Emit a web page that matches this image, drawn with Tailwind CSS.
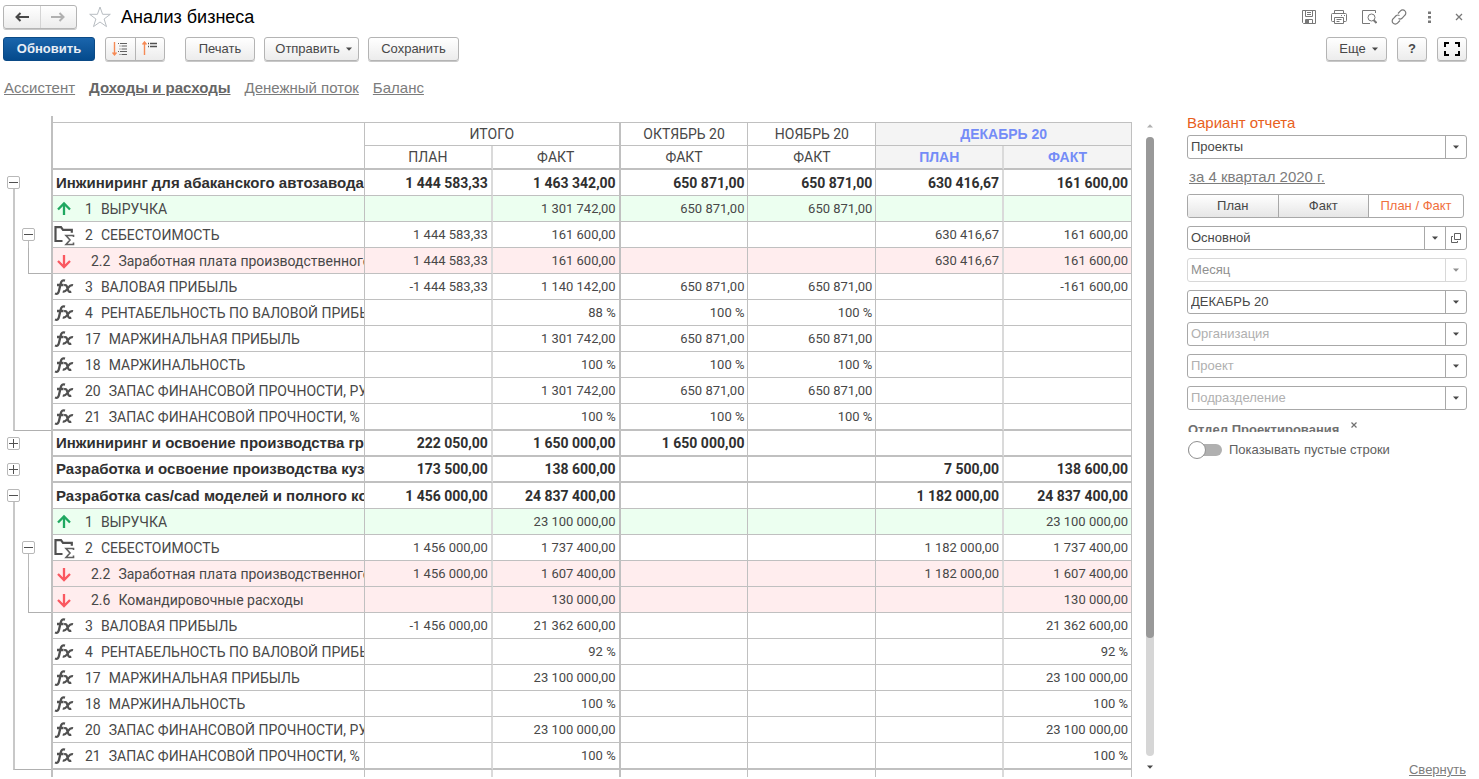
<!DOCTYPE html>
<html lang="ru">
<head>
<meta charset="utf-8">
<title>Анализ бизнеса</title>
<script src="https://cdn.jsdelivr.net/npm/@tailwindcss/browser@4"></script>
</head>
<body class="bg-white font-['Liberation_Sans',sans-serif] text-[13px] text-[#484848]">
<svg class="hidden">
  <symbol id="up" viewBox="0 0 22 22"><path d="M11 17V5.500M5 11.500L11 5.500l6 6" fill="none" stroke="#1fa860" stroke-width="2.300"/></symbol>
  <symbol id="down" viewBox="0 0 22 22"><path d="M11 5v11.500M5 11l6 6 6-6" fill="none" stroke="#fa5860" stroke-width="2.300"/></symbol>
  <symbol id="sum" viewBox="0 0 22 22"><path d="M9.500 17H2.500V3.200h5.500l2 2.600h8.800v3" fill="none" stroke="#505050" stroke-width="2.200"/><path d="M20.500 13v-1.500h-7.500l4 4.500-4 4.500h7.500v-2" fill="none" stroke="#606060" stroke-width="1.600"/></symbol>
  <symbol id="fx" viewBox="0 0 22 22"><path d="M2 17.500c2.500 1 3.500-.5 4-2.700l1.700-7.300c.6-2.500 1.700-3.600 4.300-2.800M4 9h6.500" fill="none" stroke="#505050" stroke-width="2.300"/><path d="M11 9.300c2-.8 2.700.4 3.200 2.200l.9 2.700c.5 1.600 1.500 2 3.100 1.200M20 9.300c-2.200-.8-3.500.7-5 2.700s-2.800 4.200-5.200 3.400" fill="none" stroke="#505050" stroke-width="2.200"/></symbol>
  <symbol id="caret" viewBox="0 0 6 4"><path d="M0 .5h6L3 3.800z" fill="currentColor"/></symbol>
</svg>

<div class="flex h-screen flex-col overflow-hidden">
  <header class="pr-3 pl-[3px]">
    <div class="flex h-[34px] items-center">
      <div class="flex h-6 w-[74px] overflow-hidden rounded-[3px] border border-[#b4b4b4] bg-linear-to-b from-white to-[#ececec] shadow-[0_1px_0_#c8c8c8]">
        <button aria-label="Назад" class="flex flex-1 items-center justify-center border-r border-[#d4d4d4]"><svg class="h-[10px] w-[14px]" viewBox="0 0 14 10"><path d="M14 5H2M5.500 1L1.500 5l4 4" fill="none" stroke="#484848" stroke-width="2"/></svg></button>
        <button aria-label="Вперед" class="flex flex-1 items-center justify-center"><svg class="h-[10px] w-[14px]" viewBox="0 0 14 10"><path d="M0 5h12M8.500 1l4 4-4 4" fill="none" stroke="#b0b0b0" stroke-width="2"/></svg></button>
      </div>
      <button aria-label="В избранное" class="ml-[11px]"><svg class="size-6" viewBox="0 0 24 24"><path d="M12 2l2.600 7.300h7.700l-6.200 4.700 2.400 7.600L12 17l-6.500 4.600L7.900 14 1.700 9.300h7.700z" fill="#fff" stroke="#b8bdc2" stroke-width="1"/></svg></button>
      <h1 class="ml-[9px] text-[18px] text-black">Анализ бизнеса</h1>
      <div class="ml-auto flex items-center gap-[14px] text-[#787878]">
        <button aria-label="Сохранить файл"><svg class="size-4" viewBox="0 0 16 16" fill="none" stroke="currentColor"><path d="M1.500 1.500h13v13h-12l-1-1zM4.500 1.500v6h7v-6M6 3.500h4M6 5.500h4M4.500 14.500v-4h7v4"/><path d="M5 11h3v3H5z" fill="currentColor" stroke="none"/></svg></button>
        <button aria-label="Печать документа"><svg class="size-4" viewBox="0 0 16 16" fill="none" stroke="currentColor"><path d="M3.500 4.500v-3h9v3M3.500 12.500h-2a1 1 0 0 1-1-1v-6a1 1 0 0 1 1-1h13a1 1 0 0 1 1 1v6a1 1 0 0 1-1 1h-2M3.500 8.500h9v6h-9zM5.500 10.500h5M5.500 12.500h3M10 6.500h1M13 6.500h1"/></svg></button>
        <button aria-label="Предпросмотр"><svg class="size-4" viewBox="0 0 16 16" fill="none" stroke="currentColor"><path d="M14.500 4V1.500h-13v13H9"/><circle cx="10.500" cy="8.500" r="3.500"/><path d="M12.500 11L15.500 14" stroke-width="2"/></svg></button>
        <button aria-label="Ссылка"><svg class="size-4" viewBox="0 0 16 16" fill="none" stroke="currentColor" stroke-width="1.200"><path d="M7 4.500l2.500-2.600a3 3 0 0 1 4.400 0 3 3 0 0 1 0 4.300L11 9.300a3 3 0 0 1-3.500.3M9 11.500l-2.500 2.600a3 3 0 0 1-4.400 0 3 3 0 0 1 0-4.300L5 6.800a3 3 0 0 1 3.500-.3"/></svg></button>
        <button aria-label="Меню"><svg class="size-4" viewBox="0 0 16 16" fill="currentColor"><path d="M7 2.500h3v2.500H7zM7 7h3v2.500H7zM7 11.500h3V14H7z"/></svg></button>
        <button aria-label="Закрыть"><svg class="size-4" viewBox="0 0 16 16"><path d="M5 5l6 6M11 5l-6 6" stroke="currentColor" stroke-width="1.300"/></svg></button>
      </div>
    </div>

    <div class="flex h-[30px] items-center">
      <button class="h-6 w-[92px] rounded-[3px] border border-[#0b4a86] bg-linear-to-b from-[#1a65ac] to-[#044a8c] text-[13px] font-bold text-[#e8eef5]">Обновить</button>
      <div class="ml-[10px] flex h-6 w-[60px] rounded-[3px] border border-[#b4b4b4] bg-linear-to-b from-white to-[#ececec] shadow-[0_1px_0_#c8c8c8]">
        <button aria-label="Развернуть группы" class="flex flex-1 items-center justify-center border-r border-[#b4b4b4]"><svg class="size-4" viewBox="0 0 16 16" fill="none"><path d="M2.500 1v13M.5 11.500l2 2.500 2-2.500" stroke="#f68a55" stroke-width="1.400"/><path d="M8 2.500h7M9.500 5h5.500M9.500 8h5.500M8 10.500h7M9.500 13.500h5.500" stroke="#606060"/><path d="M6 2.500h1M7.500 5h1M7.500 8h1M6 10.500h1M7.500 13.500h1" stroke="#606060"/></svg></button>
        <button aria-label="Свернуть группы" class="flex flex-1 items-center justify-center"><svg class="size-4" viewBox="0 0 16 16" fill="none"><path d="M2.500 14V1M.5 3.500L2.500 1l2 2.500" stroke="#f68a55" stroke-width="1.400"/><path d="M6 2.500h1M8 2.500h7M6 5.500h1M8 5.500h7" stroke="#505050" stroke-width="1.400"/></svg></button>
      </div>
      <button class="ml-5 h-6 w-[70px] rounded-[3px] border border-[#b4b4b4] bg-linear-to-b from-white to-[#ececec] shadow-[0_1px_0_#c8c8c8]">Печать</button>
      <button class="ml-[9px] flex h-6 w-[95px] items-center justify-center gap-[6px] rounded-[3px] border border-[#b4b4b4] bg-linear-to-b from-white to-[#ececec] pl-1 shadow-[0_1px_0_#c8c8c8]">Отправить<svg class="h-1 w-[6px]"><use href="#caret"/></svg></button>
      <button class="ml-[9px] h-6 w-[91px] rounded-[3px] border border-[#b4b4b4] bg-linear-to-b from-white to-[#ececec] shadow-[0_1px_0_#c8c8c8]">Сохранить</button>
      <button class="ml-auto flex h-6 w-[61px] items-center justify-center gap-[6px] rounded-[3px] border border-[#b4b4b4] bg-linear-to-b from-white to-[#ececec] pl-1 shadow-[0_1px_0_#c8c8c8]">Еще<svg class="h-1 w-[6px]"><use href="#caret"/></svg></button>
      <button class="ml-[10px] h-6 w-[30px] rounded-[3px] border border-[#b4b4b4] bg-linear-to-b from-white to-[#ececec] font-bold shadow-[0_1px_0_#c8c8c8]">?</button>
      <button aria-label="На весь экран" class="ml-[10px] flex h-6 w-[30px] items-center justify-center rounded-[3px] border border-[#b4b4b4] bg-linear-to-b from-white to-[#ececec] shadow-[0_1px_0_#c8c8c8]"><svg class="size-4" viewBox="0 0 16 16"><path d="M1 6V2h4M11 2h4v4M15 10v4h-4M5 14H1v-4" fill="none" stroke="#000" stroke-width="2"/></svg></button>
    </div>

    <nav class="flex h-[52px] items-center gap-[14px] pb-[3px] pl-px text-[15px] text-[#7c7c7c]">
      <a href="#" class="underline">Ассистент</a>
      <a href="#" class="font-bold text-[#666] underline">Доходы и расходы</a>
      <a href="#" class="underline">Денежный поток</a>
      <a href="#" class="underline">Баланс</a>
    </nav>
  </header>

  <div class="flex min-h-0 flex-1">
    <div class="mb-[2px] min-w-0 flex-1 overflow-hidden">
      <table class="w-full table-fixed border-separate border-spacing-0">
        <colgroup><col class="w-[51px]"><col class="w-[314px]"><col><col><col><col><col><col></colgroup>
        <thead class="text-[14px] leading-[18px]">
          <tr class="h-[7px]"><td></td><td class="border-b border-l-2 border-[#c0c0c0]"></td><td colspan="6" class="border-b border-[#c0c0c0]"></td></tr>
          <tr class="h-[23px]">
            <td rowspan="2"></td>
            <th rowspan="2" class="border-r border-b-2 border-l-2 border-[#c0c0c0]"></th>
            <th colspan="2" class="border-r-2 border-b border-[#c0c0c0] p-0 font-[Roboto,sans-serif] font-normal">ИТОГО</th>
            <th class="border-r border-b border-[#c0c0c0] p-0 font-[Roboto,sans-serif] font-normal">ОКТЯБРЬ 20</th>
            <th class="border-r border-b border-[#c0c0c0] p-0 font-[Roboto,sans-serif] font-normal">НОЯБРЬ 20</th>
            <th colspan="2" class="border-r border-b border-[#c0c0c0] bg-[#f4f4f4] p-0 text-[#748cf7]">ДЕКАБРЬ 20</th>
          </tr>
          <tr class="h-6">
            <th class="border-r-2 border-b-2 border-[#c0c0c0] border-r-[#dadada] p-0 font-[Roboto,sans-serif] font-normal">ПЛАН</th>
            <th class="border-r-2 border-b-2 border-[#c0c0c0] p-0 font-[Roboto,sans-serif] font-normal">ФАКТ</th>
            <th class="border-r border-b-2 border-[#c0c0c0] p-0 font-[Roboto,sans-serif] font-normal">ФАКТ</th>
            <th class="border-r border-b-2 border-[#c0c0c0] p-0 font-[Roboto,sans-serif] font-normal">ФАКТ</th>
            <th class="border-r-2 border-b-2 border-[#c0c0c0] border-r-[#dadada] bg-[#f4f4f4] p-0 text-[#748cf7]">ПЛАН</th>
            <th class="border-r border-b-2 border-[#c0c0c0] bg-[#f4f4f4] p-0 text-[#748cf7]">ФАКТ</th>
          </tr>
        </thead>
        <tbody id="rows"></tbody>
      </table>
    </div>

    <div class="ml-[14px] flex w-2 flex-col items-center pt-2 pb-[10px]">
      <svg class="h-1 w-[6px] rotate-180 text-[#b0b0b0]"><use href="#caret"/></svg>
      <div class="mt-[9px] w-2 flex-1 rounded-full bg-[#d6d6d6]"><div class="h-[81%] rounded-full bg-[#999]"></div></div>
      <svg class="mt-[9px] h-1 w-[6px]"><use href="#caret"/></svg>
    </div>

    <aside class="mr-3 ml-[33px] flex w-[280px] flex-col">
      <label for="variant" class="h-[19px] text-[15px] leading-[14px] text-[#e8601c]">Вариант отчета</label>
      <div class="relative h-6 shrink-0 rounded-[3px] border border-[#a8a8a8]">
        <select id="variant" class="block h-full w-full appearance-none pl-[3px] outline-none"><option>Проекты</option></select>
        <span class="pointer-events-none absolute inset-y-0 right-0 flex w-[21px] items-center justify-center border-l border-[#a8a8a8]"><svg class="h-1 w-[6px]"><use href="#caret"/></svg></span>
      </div>
      <a href="#" class="mt-[10px] ml-[2px] h-[25px] text-[15px] leading-4 text-[#7c7c7c] underline">за 4 квартал 2020 г.</a>
      <div class="mr-[3px] flex h-6 shrink-0 overflow-hidden rounded-[3px] border border-[#a8a8a8]">
        <button class="flex-1 border-r border-[#a8a8a8] bg-linear-to-b from-white to-[#e6e6e6]">План</button>
        <button class="flex-1 border-r border-[#a8a8a8] bg-linear-to-b from-white to-[#e6e6e6]">Факт</button>
        <button class="w-[94px] text-[#f0703c]">План / Факт</button>
      </div>
      <div class="mt-2 flex flex-col gap-2">
        <div class="relative h-6 rounded-[3px] border border-[#a8a8a8] pr-[21px]">
          <select aria-label="Сценарий" class="block h-full w-full appearance-none pl-[3px] outline-none"><option>Основной</option></select>
          <span class="pointer-events-none absolute inset-y-0 right-[21px] flex w-[21px] items-center justify-center border-l border-[#a8a8a8]"><svg class="h-1 w-[6px]"><use href="#caret"/></svg></span>
          <button aria-label="Открыть" class="absolute inset-y-0 right-0 flex w-[21px] items-center justify-center border-l border-[#a8a8a8]"><svg class="size-[10px]" viewBox="0 0 10 10" fill="none" stroke="#606060"><path d="M3.500.5h6v6h-6zM2 3.500H.5v6h6V8"/></svg></button>
        </div>
        <div class="relative h-6 rounded-[3px] border border-[#d8d8d8] text-[#909090]">
          <select aria-label="Период" disabled class="block h-full w-full appearance-none pl-[3px] opacity-100 outline-none"><option>Месяц</option></select>
          <span class="pointer-events-none absolute inset-y-0 right-0 flex w-[21px] items-center justify-center border-l border-[#d8d8d8]"><svg class="h-1 w-[6px]"><use href="#caret"/></svg></span>
        </div>
        <div class="relative h-6 rounded-[3px] border border-[#a8a8a8]">
          <select aria-label="Месяц" class="block h-full w-full appearance-none pl-[3px] outline-none"><option>ДЕКАБРЬ 20</option></select>
          <span class="pointer-events-none absolute inset-y-0 right-0 flex w-[21px] items-center justify-center border-l border-[#a8a8a8]"><svg class="h-1 w-[6px]"><use href="#caret"/></svg></span>
        </div>
        <div class="relative h-6 rounded-[3px] border border-[#a8a8a8]">
          <select aria-label="Организация" class="block h-full w-full appearance-none pl-[3px] text-[#b0b0b0] outline-none"><option>Организация</option></select>
          <span class="pointer-events-none absolute inset-y-0 right-0 flex w-[21px] items-center justify-center border-l border-[#a8a8a8]"><svg class="h-1 w-[6px]"><use href="#caret"/></svg></span>
        </div>
        <div class="relative h-6 rounded-[3px] border border-[#a8a8a8]">
          <select aria-label="Проект" class="block h-full w-full appearance-none pl-[3px] text-[#b0b0b0] outline-none"><option>Проект</option></select>
          <span class="pointer-events-none absolute inset-y-0 right-0 flex w-[21px] items-center justify-center border-l border-[#a8a8a8]"><svg class="h-1 w-[6px]"><use href="#caret"/></svg></span>
        </div>
        <div class="relative h-6 rounded-[3px] border border-[#a8a8a8]">
          <select aria-label="Подразделение" class="block h-full w-full appearance-none pl-[3px] text-[#b0b0b0] outline-none"><option>Подразделение</option></select>
          <span class="pointer-events-none absolute inset-y-0 right-0 flex w-[21px] items-center justify-center border-l border-[#a8a8a8]"><svg class="h-1 w-[6px]"><use href="#caret"/></svg></span>
        </div>
      </div>
      <div class="mt-[10px] flex h-3 shrink-0 gap-2 overflow-hidden pl-px">
        <span class="font-bold text-[#707070]">Отдел Проектирования</span>
        <button aria-label="Убрать отдел" class="ml-1 flex h-[10px] items-center"><svg class="size-[6px]" viewBox="0 0 6 6"><path d="M.5.5l5 5M5.500.5l-5 5" stroke="#707070" stroke-width="1.200"/></svg></button>
      </div>
      <label class="mt-2 flex items-center gap-[7px] pl-px text-[#606060]">
        <input type="checkbox" class="peer sr-only">
        <span class="flex h-[18px] w-[34px] items-center"><span class="h-3 w-full rounded-full bg-[#b0b0b0]"><span class="-mt-[3px] block size-[18px] rounded-full border border-[#909090] bg-white"></span></span></span>
        Показывать пустые строки
      </label>
      <a href="#" class="mt-auto mr-px mb-px self-end text-[13px] leading-4 text-[#7c7c7c] underline">Свернуть</a>
    </aside>
  </div>
</div>

<script>
// [kind, outer branch, inner branch, number, name, six column values]
const data = [
  ["head","open","","","Инжиниринг для абаканского автозавода",["1 444 583,33","1 463 342,00","650 871,00","650 871,00","630 416,67","161 600,00"]],
  ["up","line","","1","ВЫРУЧКА",["","1 301 742,00","650 871,00","650 871,00","",""]],
  ["sum","line","open","2","СЕБЕСТОИМОСТЬ",["1 444 583,33","161 600,00","","","630 416,67","161 600,00"]],
  ["down","line","end","2.2","Заработная плата производственного",["1 444 583,33","161 600,00","","","630 416,67","161 600,00"]],
  ["fx","line","","3","ВАЛОВАЯ ПРИБЫЛЬ",["-1 444 583,33","1 140 142,00","650 871,00","650 871,00","","-161 600,00"]],
  ["fx","line","","4","РЕНТАБЕЛЬНОСТЬ ПО ВАЛОВОЙ ПРИБЫЛИ",["","88 %","100 %","100 %","",""]],
  ["fx","line","","17","МАРЖИНАЛЬНАЯ ПРИБЫЛЬ",["","1 301 742,00","650 871,00","650 871,00","",""]],
  ["fx","line","","18","МАРЖИНАЛЬНОСТЬ",["","100 %","100 %","100 %","",""]],
  ["fx","line","","20","ЗАПАС ФИНАНСОВОЙ ПРОЧНОСТИ, РУБ",["","1 301 742,00","650 871,00","650 871,00","",""]],
  ["fx","end","","21","ЗАПАС ФИНАНСОВОЙ ПРОЧНОСТИ, %",["","100 %","100 %","100 %","",""]],
  ["head","closed","","","Инжиниринг и освоение производства грузовиков",["222 050,00","1 650 000,00","1 650 000,00","","",""]],
  ["head","closed","","","Разработка и освоение производства кузовов",["173 500,00","138 600,00","","","7 500,00","138 600,00"]],
  ["head","open","","","Разработка cas/cad моделей и полного комплекта",["1 456 000,00","24 837 400,00","","","1 182 000,00","24 837 400,00"]],
  ["up","line","","1","ВЫРУЧКА",["","23 100 000,00","","","","23 100 000,00"]],
  ["sum","line","open","2","СЕБЕСТОИМОСТЬ",["1 456 000,00","1 737 400,00","","","1 182 000,00","1 737 400,00"]],
  ["down","line","line","2.2","Заработная плата производственного",["1 456 000,00","1 607 400,00","","","1 182 000,00","1 607 400,00"]],
  ["down","line","end","2.6","Командировочные расходы",["","130 000,00","","","","130 000,00"]],
  ["fx","line","","3","ВАЛОВАЯ ПРИБЫЛЬ",["-1 456 000,00","21 362 600,00","","","","21 362 600,00"]],
  ["fx","line","","4","РЕНТАБЕЛЬНОСТЬ ПО ВАЛОВОЙ ПРИБЫЛИ",["","92 %","","","","92 %"]],
  ["fx","line","","17","МАРЖИНАЛЬНАЯ ПРИБЫЛЬ",["","23 100 000,00","","","","23 100 000,00"]],
  ["fx","line","","18","МАРЖИНАЛЬНОСТЬ",["","100 %","","","","100 %"]],
  ["fx","line","","20","ЗАПАС ФИНАНСОВОЙ ПРОЧНОСТИ, РУБ",["","23 100 000,00","","","","23 100 000,00"]],
  ["fx","end","","21","ЗАПАС ФИНАНСОВОЙ ПРОЧНОСТИ, %",["","100 %","","","","100 %"]],
  ["blank","","","","",["","","","","",""]]
];
const lines = {
  outer: {
    open: '<span class="absolute top-1/2 bottom-0 left-[13px] border-l-2 border-[#c8c8c8]"></span>',
    line: '<span class="absolute inset-y-0 left-[13px] border-l-2 border-[#c8c8c8]"></span>',
    end: '<span class="absolute inset-y-0 right-0 left-[13px] border-b border-l-2 border-[#c8c8c8] border-b-[#b0b0b0]"></span>'
  },
  inner: {
    open: '<span class="absolute top-1/2 bottom-0 left-[28px] border-l border-[#b8b8b8]"></span>',
    line: '<span class="absolute inset-y-0 left-[28px] border-l border-[#b8b8b8]"></span>',
    end: '<span class="absolute inset-y-0 right-0 left-[28px] border-b border-l border-[#b0b0b0]"></span>'
  }
};
const minus = '<svg class="size-full" viewBox="0 0 11 11"><path d="M1 5.500h9" stroke="#505050"/></svg>';
const plus = '<svg class="size-full" viewBox="0 0 11 11"><path d="M1 5.500h9M5.500 1v9" stroke="#505050"/></svg>';
const toggle = (state, level) => {
  if (state !== "open" && state !== "closed") return "";
  const place = level === "outer"
    ? "absolute top-[6px] left-[7px] size-[13px] rounded-[2px] border border-[#b8b8b8] bg-white"
    : "absolute top-[6px] left-[22px] size-[13px] rounded-[2px] border border-[#b8b8b8] bg-white";
  return `<button class="${place}" aria-label="${state === "open" ? "Свернуть" : "Развернуть"}">${state === "open" ? minus : plus}</button>`;
};
const fill = { up: "bg-[#ecfff0]", down: "bg-[#ffedee]" };
const rules = ["border-r-2 border-r-[#dadada]", "border-r-2", "border-r", "border-r", "border-r-2 border-r-[#dadada]", "border-r"];
document.getElementById("rows").innerHTML = data.map(([kind, outer, inner, num, name, cells], i) => {
  const head = kind === "head";
  const next = data[i + 1];
  const thick = next && (next[0] === "head" || next[0] === "blank");
  const line = thick ? "border-b-2" : "border-b";
  const label = head || kind === "blank"
    ? `<div class="overflow-hidden pl-[3px] text-[15px] leading-[18px] whitespace-nowrap">${name}</div>`
    : `<div class="flex h-[22px] items-center overflow-hidden font-[Roboto,sans-serif] text-[14px] leading-[18px] whitespace-nowrap"><svg class="size-[22px] shrink-0"><use href="#${kind}"/></svg><span class="${kind === "down" ? "ml-4" : "ml-[10px]"}">${num}</span><span class="ml-2">${name}</span></div>`;
  return `<tr class="${outer === "end" ? "h-[27px]" : "h-[26px]"} ${head ? "text-[14px] font-bold text-[#303030]" : "text-[13px]"} ${fill[kind] || ""}">
    <td class="relative bg-white p-0">${lines.outer[outer] || ""}${lines.inner[inner] || ""}${toggle(outer, "outer")}${toggle(inner, "inner")}</td>
    <td class="border-r border-l-2 border-[#c0c0c0] p-0 ${line}">${label}</td>
    ${cells.map((c, j) => `<td class="border-[#c0c0c0] p-0 pr-[3px] text-right font-[Roboto,sans-serif] leading-[18px] whitespace-nowrap ${rules[j]} ${line}">${c}</td>`).join("")}
  </tr>`;
}).join("");
</script>
</body>
</html>
